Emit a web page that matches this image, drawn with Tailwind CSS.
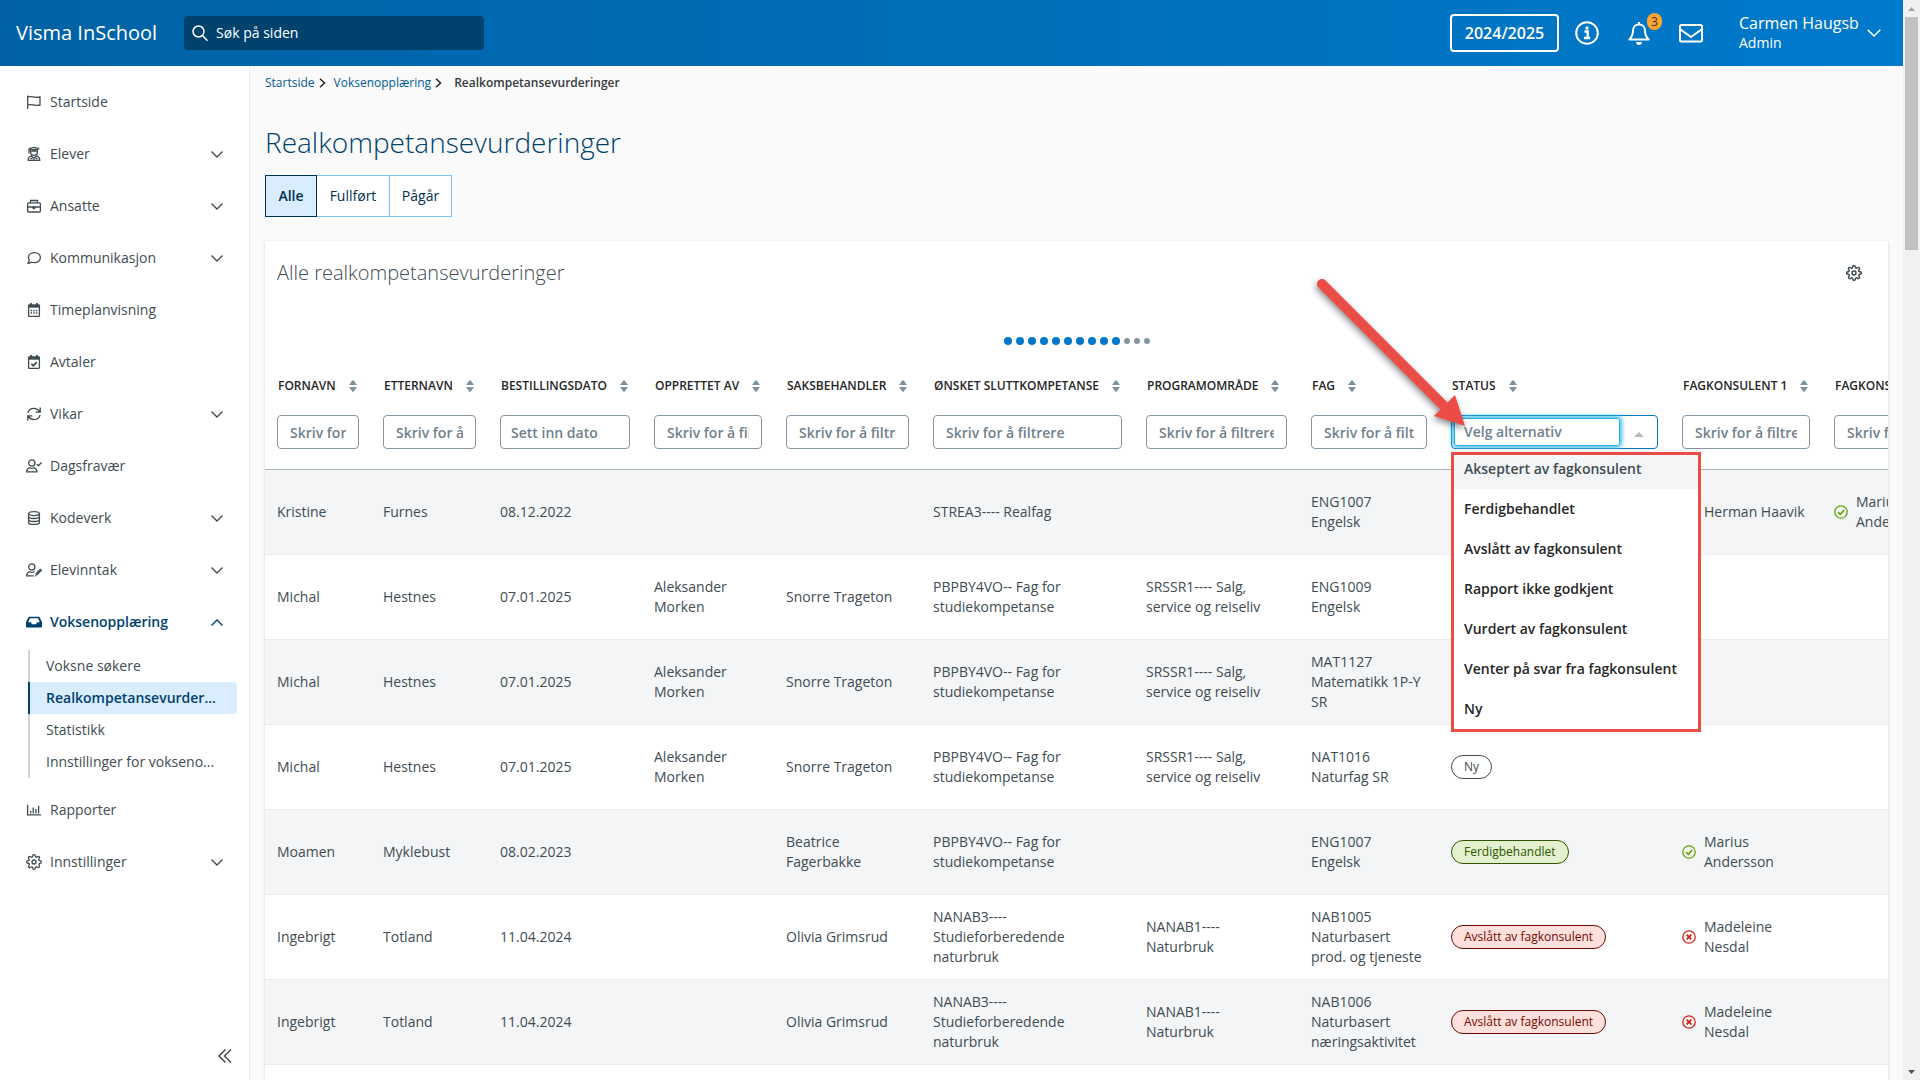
<!DOCTYPE html>
<html lang="nb">
<head>
  <meta charset="UTF-8" />
  <meta name="viewport" content="width=device-width, initial-scale=1.0"/>
  <title>Realkompetansevurderinger - Visma InSchool</title>
  <script src="https://cdn.jsdelivr.net/npm/@tailwindcss/browser@4"></script>
</head>
<body class="h-screen overflow-hidden flex bg-[#fafafa] font-['Open_Sans',sans-serif] text-sm text-[#414c52]">
  <div class="flex-1 min-w-0 flex flex-col">

    <!-- Top bar -->
    <header class="h-[66px] shrink-0 flex items-center pl-4 pr-[22px] text-white bg-linear-to-r from-[#0062a5] to-[#007acc]">
      <a href="#" class="text-xl">Visma InSchool</a>
      <label class="ml-[27px] w-[300px] h-[34px] flex items-center gap-2 px-2 rounded bg-[#00426e]">
        <svg class="size-4 shrink-0" viewBox="0 0 16 16" fill="none" stroke="currentColor" stroke-width="1.5" stroke-linecap="round"><circle cx="6.5" cy="6.5" r="5.5"/><path d="M10.5 10.5 15 15.2"/></svg>
        <input type="search" aria-label="Søk på siden" placeholder="Søk på siden" class="w-full bg-transparent outline-none placeholder:text-white" />
      </label>
      <button class="ml-auto w-[109px] h-[38px] border-2 border-white rounded text-base font-semibold">2024/2025</button>
      <button class="ml-4" aria-label="Informasjon">
        <svg class="size-6" viewBox="0 0 24 24" fill="none" stroke="currentColor" stroke-width="2"><circle cx="12" cy="12" r="10.8"/><path d="M9.5 10.5h3.2v6M9 17h6.2" stroke-width="2.4"/><circle cx="12" cy="7" r="1.7" fill="currentColor" stroke="none"/></svg>
      </button>
      <button class="ml-7 relative" aria-label="Varsler">
        <svg class="size-6" viewBox="0 0 24 24" fill="none" stroke="currentColor" stroke-width="2" stroke-linejoin="round"><path d="M12 1v2.5M12 3.5c-3.8 0-6 2.8-6 6.3 0 4.2-1.3 6.3-3.6 8.7h19.2c-2.3-2.4-3.6-4.5-3.6-8.7 0-3.5-2.2-6.3-6-6.3z"/><path d="M9 21h6a3 3 0 0 1-6 0z" fill="currentColor" stroke="none"/></svg>
        <span class="absolute left-5 -top-2 w-[15px] h-[17px] rounded-full bg-[#ffa52c] text-[#2d3438] text-xs leading-[17px]">3</span>
      </button>
      <button class="ml-7" aria-label="Meldinger">
        <svg class="size-6" viewBox="0 0 24 24" fill="none" stroke="currentColor" stroke-width="2" stroke-linejoin="round"><rect x="1" y="4" width="22" height="16.5" rx="1.5"/><path d="M1.5 8.500 12 16l10.5-7.5"/></svg>
      </button>
      <button class="ml-9 flex items-center gap-2 text-left">
        <span class="w-[120px]"><span class="block text-base leading-5 whitespace-nowrap">Carmen Haugsb</span><span class="block leading-5">Admin</span></span>
        <svg class="w-[14px] h-2" viewBox="0 0 14 8" fill="none" stroke="currentColor" stroke-width="1.5"><path d="m.7.7 6.3 6.3L13.3.7"/></svg>
      </button>
    </header>

    <div class="flex-1 min-h-0 flex">
      <!-- Sidebar -->
      <nav class="w-[250px] shrink-0 bg-white border-r border-[#eceeef] pt-[10px] pb-3 flex flex-col" aria-label="Hovedmeny">
        <a href="#" class="h-[52px] flex items-center gap-2 pl-[26px] pr-[26px]">
          <svg class="size-4" viewBox="0 0 16 16" fill="none" stroke="currentColor" stroke-width="1.3"><path d="M1.7 1.5V15M1.7 3c3.8-1.600 6.2 1.4 12.3 0v8c-6.1 1.4-8.5-1.6-12.3 0"/></svg>
          Startside
        </a>
        <a href="#" class="h-[52px] flex items-center gap-2 pl-[26px] pr-[26px]">
          <svg class="size-4" viewBox="0 0 16 16" fill="none" stroke="currentColor" stroke-width="1.3"><path d="M2.800 2.600 8 1.400l5.200 1.200L8 4zM4.600 3.400V6a3.400 3.400 0 0 0 6.800 0V3.400M4.600 5.200h6.800M3 3v4.500M2.200 14.400c0-2.400 1-3.800 2.800-4.400L8 12l3-2c1.800.6 2.800 2 2.800 4.400zM8 12v2.200M4.500 12.500h2M9.500 12.500h2"/></svg>
          Elever
          <svg class="ml-auto w-3 h-[7px]" viewBox="0 0 12 7" fill="none" stroke="currentColor" stroke-width="1.4"><path d="m.5.5 5.5 5.5L11.5.5"/></svg>
        </a>
        <a href="#" class="h-[52px] flex items-center gap-2 pl-[26px] pr-[26px]">
          <svg class="size-4" viewBox="0 0 16 16" fill="none" stroke="currentColor" stroke-width="1.3"><rect x="1.6" y="4.800" width="12.8" height="9.200" rx="1"/><path d="M4.500 4.800V2.500h7v2.300M1.600 9h12.800"/><path d="M6.300 8.500h3.400v1.800L8 11.400l-1.700-1.100z" fill="currentColor" stroke="none"/></svg>
          Ansatte
          <svg class="ml-auto w-3 h-[7px]" viewBox="0 0 12 7" fill="none" stroke="currentColor" stroke-width="1.4"><path d="m.5.5 5.5 5.5L11.5.5"/></svg>
        </a>
        <a href="#" class="h-[52px] flex items-center gap-2 pl-[26px] pr-[26px]">
          <svg class="size-4" viewBox="0 0 16 16" fill="none" stroke="currentColor" stroke-width="1.3" stroke-linejoin="round"><path d="M8.400 2.700c3.400 0 6 2.100 6 4.900s-2.600 5-6 5c-1.100 0-2-.2-2.900-.6-.9.8-2.200 1.400-3.700 1.400.8-.9 1.300-1.900 1.400-3-.5-.8-.8-1.700-.8-2.800 0-2.800 2.600-4.900 6-4.900z"/></svg>
          Kommunikasjon
          <svg class="ml-auto w-3 h-[7px]" viewBox="0 0 12 7" fill="none" stroke="currentColor" stroke-width="1.4"><path d="m.5.5 5.5 5.5L11.5.5"/></svg>
        </a>
        <a href="#" class="h-[52px] flex items-center gap-2 pl-[26px] pr-[26px]">
          <svg class="size-4" viewBox="0 0 16 16" fill="none" stroke="currentColor" stroke-width="1.3"><rect x="2.600" y="3" width="10.8" height="11.4" rx=".8"/><path d="M2.600 4.300h10.8" stroke-width="2.8"/><path d="M5 1v3M11 1v3" stroke-width="1.8"/><path d="M4.500 8.500h7M4.500 11h7" stroke-width="1.5" stroke-dasharray="1.5 1.2"/></svg>
          Timeplanvisning
        </a>
        <a href="#" class="h-[52px] flex items-center gap-2 pl-[26px] pr-[26px]">
          <svg class="size-4" viewBox="0 0 16 16" fill="none" stroke="currentColor" stroke-width="1.3"><rect x="2.600" y="3" width="10.8" height="11.4" rx=".8"/><path d="M2.600 4.300h10.8" stroke-width="2.8"/><path d="M5 1v3M11 1v3" stroke-width="1.8"/><path d="m5.300 9.800 2 1.900 3.500-3.600" stroke-width="1.7"/></svg>
          Avtaler
        </a>
        <a href="#" class="h-[52px] flex items-center gap-2 pl-[26px] pr-[26px]">
          <svg class="size-4" viewBox="0 0 16 16" fill="none" stroke="currentColor" stroke-width="1.4"><path d="M2 7c.5-2.900 3-4.600 6-4.600 2.400 0 4.300 1.200 5.500 3.200M14.200 1.500v4.600H9.700M14 9c-.5 2.900-3 4.600-6 4.600-2.400 0-4.300-1.200-5.500-3.200M1.800 14.500V9.900h4.500"/></svg>
          Vikar
          <svg class="ml-auto w-3 h-[7px]" viewBox="0 0 12 7" fill="none" stroke="currentColor" stroke-width="1.4"><path d="m.5.5 5.5 5.5L11.5.5"/></svg>
        </a>
        <a href="#" class="h-[52px] flex items-center gap-2 pl-[26px] pr-[26px]">
          <svg class="size-4" viewBox="0 0 16 16" fill="none" stroke="currentColor" stroke-width="1.3"><circle cx="5.8" cy="5" r="3.1"/><path d="M3.500 9.700C1.800 10.200.8 11.600.7 13.900h10.200c-.1-2.300-1.100-3.700-2.800-4.200-1.400.8-3.200.8-4.600 0zM10.700 6.200l1.700 1.600 3.200-3.400"/></svg>
          Dagsfravær
        </a>
        <a href="#" class="h-[52px] flex items-center gap-2 pl-[26px] pr-[26px]">
          <svg class="size-4" viewBox="0 0 16 16" fill="none" stroke="currentColor" stroke-width="1.3"><ellipse cx="8" cy="3.6" rx="5.4" ry="2"/><path d="M2.600 3.600v8.800c0 1.100 2.400 2 5.400 2s5.400-.9 5.400-2V3.600M2.600 6.500c0 1.100 2.400 2 5.400 2s5.400-.9 5.400-2M2.600 9.500c0 1.100 2.400 2 5.400 2s5.400-.9 5.400-2"/></svg>
          Kodeverk
          <svg class="ml-auto w-3 h-[7px]" viewBox="0 0 12 7" fill="none" stroke="currentColor" stroke-width="1.4"><path d="m.5.5 5.5 5.5L11.5.5"/></svg>
        </a>
        <a href="#" class="h-[52px] flex items-center gap-2 pl-[26px] pr-[26px]">
          <svg class="size-4" viewBox="0 0 16 16" fill="none" stroke="currentColor" stroke-width="1.3"><circle cx="5.8" cy="5" r="3.1"/><path d="M8.500 9.900c-.2-.1-.3-.2-.5-.2-1.400.8-3.100.8-4.500 0C1.800 10.200.8 11.600.7 13.900h7"/><path d="m10.200 12.600 5-5.100" stroke-width="2.6"/><path d="m8.800 14.400.4-2 1.700 1.600z" fill="currentColor" stroke="none"/></svg>
          Elevinntak
          <svg class="ml-auto w-3 h-[7px]" viewBox="0 0 12 7" fill="none" stroke="currentColor" stroke-width="1.4"><path d="m.5.5 5.5 5.5L11.5.5"/></svg>
        </a>
        <a href="#" class="h-[52px] flex items-center gap-2 pl-[26px] pr-[26px] font-semibold text-[#00426e]">
          <svg class="size-4" viewBox="0 0 16 16" fill="currentColor"><path fill-rule="evenodd" d="M3.400 2.700h9.200c.5 0 .8.200 1 .6L16 8v4.600c0 .6-.4 1-1 1H1c-.6 0-1-.4-1-1V8l2.400-4.700c.2-.4.5-.6 1-.6zM4 4.300 2.200 8.200h2.600c.6 0 .6 2 1.400 2h3.600c.8 0 .8-2 1.400-2h2.600L12 4.300z"/></svg>
          Voksenopplæring
          <svg class="ml-auto w-3 h-[7px]" viewBox="0 0 12 7" fill="none" stroke="currentColor" stroke-width="1.4"><path d="m.5 6.500 5.500-5.500 5.500 5.500"/></svg>
        </a>
        <div class="mt-[2px] mb-[6px] ml-7 mr-3 leading-8">
          <a href="#" class="block border-l-2 border-[#ccd3d6] px-4">Voksne søkere</a>
          <a href="#" class="block border-l-2 border-[#00426e] px-4 bg-[#d9edff] rounded-r text-[#00426e] font-semibold whitespace-nowrap" aria-current="page">Realkompetansevurder...</a>
          <a href="#" class="block border-l-2 border-[#ccd3d6] px-4">Statistikk</a>
          <a href="#" class="block border-l-2 border-[#ccd3d6] px-4 whitespace-nowrap">Innstillinger for vokseno...</a>
        </div>
        <a href="#" class="h-[52px] flex items-center gap-2 pl-[26px] pr-[26px]">
          <svg class="size-4" viewBox="0 0 16 16" fill="none" stroke="currentColor" stroke-width="1.3"><path d="M1.600 2.800v10.100h13.400M4.700 11.500V9M7.200 11.500V5.500M9.900 11.500V7M12.600 11.500V3.800"/></svg>
          Rapporter
        </a>
        <a href="#" class="h-[52px] flex items-center gap-2 pl-[26px] pr-[26px]">
          <svg class="size-4" viewBox="0 0 24 24" fill="none" stroke="currentColor" stroke-width="2"><circle cx="12" cy="12" r="3"/><path d="M19.400 15a1.650 1.650 0 0 0 .33 1.820l.06.060a2 2 0 1 1-2.830 2.830l-.06-.06a1.650 1.650 0 0 0-2.800 1.170V21a2 2 0 0 1-4 0v-.09a1.650 1.650 0 0 0-2.900-1.100l-.06.06a2 2 0 1 1-2.830-2.830l.06-.06A1.650 1.650 0 0 0 3.100 14H3a2 2 0 0 1 0-4h.09a1.650 1.650 0 0 0 1.100-2.900l-.06-.06a2 2 0 1 1 2.830-2.830l.06.06A1.650 1.650 0 0 0 10 3.100V3a2 2 0 0 1 4 0v.09a1.650 1.650 0 0 0 2.900 1.100l.06-.06a2 2 0 1 1 2.830 2.830l-.06.06A1.650 1.650 0 0 0 20.900 10H21a2 2 0 0 1 0 4h-.09a1.650 1.650 0 0 0-1.510 1z"/></svg>
          Innstillinger
          <svg class="ml-auto w-3 h-[7px]" viewBox="0 0 12 7" fill="none" stroke="currentColor" stroke-width="1.4"><path d="m.5.5 5.5 5.5L11.5.5"/></svg>
        </a>
        <button class="mt-auto ml-auto mr-4" aria-label="Skjul meny">
          <svg class="w-4 h-6" viewBox="0 0 16 24" fill="none" stroke="currentColor" stroke-width="1.5"><path d="M8.500 5.500 2 12l6.500 6.500M14 5.500 7.500 12l6.500 6.500"/></svg>
        </button>
      </nav>

      <!-- Content -->
      <main class="flex-1 min-w-0 px-[15px] overflow-hidden">
        <nav class="h-[34px] flex items-center gap-1 text-xs text-[#005b99]" aria-label="Brødsmulesti">
          <a href="#">Startside</a>
          <svg class="w-[7px] h-[10px] mr-1" viewBox="0 0 7 10" fill="none" stroke="#252626" stroke-width="1.5"><path d="m1 .7 4.5 4.3L1 9.3"/></svg>
          <a href="#">Voksenopplæring</a>
          <svg class="w-[7px] h-[10px] mr-2" viewBox="0 0 7 10" fill="none" stroke="#252626" stroke-width="1.5"><path d="m1 .7 4.5 4.3L1 9.3"/></svg>
          <span class="text-[#353a3d] font-semibold">Realkompetansevurderinger</span>
        </nav>

        <h1 class="mt-[23px] text-[28px] leading-[38px] font-light text-[#00426e]">Realkompetansevurderinger</h1>

        <div class="mt-[14px] flex h-[42px] text-[#00314f]">
          <button class="w-[52px] border border-[#00314f] bg-[#d9edff] font-semibold">Alle</button>
          <button class="w-[73px] border border-l-0 border-[#80c1f6] bg-white">Fullført</button>
          <button class="w-[62px] border border-l-0 border-[#80c1f6] bg-white">Pågår</button>
        </div>

        <section class="mt-6 bg-white shadow-[0_1px_3px_rgba(0,0,0,0.15)] overflow-hidden">
          <div class="h-16 flex items-center justify-between pl-3 pr-[26px]">
            <h2 class="text-xl font-light">Alle realkompetansevurderinger</h2>
            <button aria-label="Tabellinnstillinger">
              <svg class="size-4" viewBox="0 0 24 24" fill="none" stroke="#414c52" stroke-width="2.2"><circle cx="12" cy="12" r="3"/><path d="M19.400 15a1.650 1.650 0 0 0 .33 1.820l.06.060a2 2 0 1 1-2.830 2.830l-.06-.06a1.650 1.650 0 0 0-2.800 1.170V21a2 2 0 0 1-4 0v-.09a1.650 1.650 0 0 0-2.900-1.100l-.06.06a2 2 0 1 1-2.830-2.830l.06-.06A1.650 1.650 0 0 0 3.100 14H3a2 2 0 0 1 0-4h.09a1.650 1.650 0 0 0 1.100-2.900l-.06-.06a2 2 0 1 1 2.830-2.830l.06.06A1.650 1.650 0 0 0 10 3.100V3a2 2 0 0 1 4 0v.09a1.650 1.650 0 0 0 2.900 1.100l.06-.06a2 2 0 1 1 2.830 2.830l-.06.06A1.650 1.650 0 0 0 20.900 10H21a2 2 0 0 1 0 4h-.09a1.650 1.650 0 0 0-1.510 1z"/></svg>
            </button>
          </div>

          <div id="progress" class="h-[72px] flex items-center justify-center gap-1"></div>

          <table class="w-[1730px] table-fixed border-separate border-spacing-0 text-left">
            <colgroup>
              <col class="w-[106px]" /><col class="w-[117px]" /><col class="w-[154px]" /><col class="w-[132px]" />
              <col class="w-[147px]" /><col class="w-[213px]" /><col class="w-[165px]" /><col class="w-[140px]" />
              <col class="w-[231px]" /><col class="w-[152px]" /><col />
            </colgroup>
            <thead>
              <tr id="headRow"></tr>
            </thead>
            <tbody id="bodyRows"></tbody>
          </table>
        </section>
      </main>
    </div>
  </div>

  <!-- Scrollbar -->
  <div class="w-[17px] shrink-0 bg-[#f1f1f1] flex flex-col items-center" aria-hidden="true">
    <svg class="size-[17px]" viewBox="0 0 17 17" fill="#a3a3a3"><path d="M5 11h7L8.500 7z"/></svg>
    <div class="w-[13px] h-[233px] bg-[#c1c1c1]"></div>
    <svg class="size-[17px] mt-auto" viewBox="0 0 17 17" fill="#505050"><path d="M5 7h7l-3.500 4z"/></svg>
  </div>

  <script>
    const columns = ['Fornavn', 'Etternavn', 'Bestillingsdato', 'Opprettet av', 'Saksbehandler', 'Ønsket sluttkompetanse',
      'Programområde', 'Fag', 'Status', 'Fagkonsulent 1', 'Fagkonsulent 2'];

    const statuses = ['Akseptert av fagkonsulent', 'Ferdigbehandlet', 'Avslått av fagkonsulent', 'Rapport ikke godkjent',
      'Vurdert av fagkonsulent', 'Venter på svar fra fagkonsulent', 'Ny'];

    const rows = [
      ['Kristine', 'Furnes', '08.12.2022', '', '', 'STREA3---- Realfag', '', 'ENG1007<br>Engelsk', '', 'ok:Herman Haavik', 'ok:Marius<br>Andersson'],
      ['Michal', 'Hestnes', '07.01.2025', 'Aleksander<br>Morken', 'Snorre Trageton', 'PBPBY4VO-- Fag for<br>studiekompetanse', 'SRSSR1---- Salg,<br>service og reiseliv', 'ENG1009<br>Engelsk', '', '', ''],
      ['Michal', 'Hestnes', '07.01.2025', 'Aleksander<br>Morken', 'Snorre Trageton', 'PBPBY4VO-- Fag for<br>studiekompetanse', 'SRSSR1---- Salg,<br>service og reiseliv', 'MAT1127<br>Matematikk 1P-Y<br>SR', '', '', ''],
      ['Michal', 'Hestnes', '07.01.2025', 'Aleksander<br>Morken', 'Snorre Trageton', 'PBPBY4VO-- Fag for<br>studiekompetanse', 'SRSSR1---- Salg,<br>service og reiseliv', 'NAT1016<br>Naturfag SR', 'Ny', '', ''],
      ['Moamen', 'Myklebust', '08.02.2023', '', 'Beatrice<br>Fagerbakke', 'PBPBY4VO-- Fag for<br>studiekompetanse', '', 'ENG1007<br>Engelsk', 'Ferdigbehandlet', 'ok:Marius<br>Andersson', ''],
      ['Ingebrigt', 'Totland', '11.04.2024', '', 'Olivia Grimsrud', 'NANAB3----<br>Studieforberedende<br>naturbruk', 'NANAB1----<br>Naturbruk', 'NAB1005<br>Naturbasert<br>prod. og tjeneste', 'Avslått av fagkonsulent', 'no:Madeleine<br>Nesdal', ''],
      ['Ingebrigt', 'Totland', '11.04.2024', '', 'Olivia Grimsrud', 'NANAB3----<br>Studieforberedende<br>naturbruk', 'NANAB1----<br>Naturbruk', 'NAB1006<br>Naturbasert<br>næringsaktivitet', 'Avslått av fagkonsulent', 'no:Madeleine<br>Nesdal', ''],
      ['', '', '', '', '', '', '', '', '', '', '']
    ];

    const tagColors = {
      'Ny': 'border-[#414c52] bg-white text-[#414c52]',
      'Ferdigbehandlet': 'border-[#2f5500] bg-[#e3f1ce] text-[#2f5500]',
      'Avslått av fagkonsulent': 'border-[#6e0a00] bg-[#ffe0dc] text-[#6e0a00]'
    };

    const icons = {
      ok: '<svg class="size-[14px] shrink-0" viewBox="0 0 14 14" fill="none" stroke="#64a70b" stroke-width="1.3"><circle cx="7" cy="7" r="6.2"/><path d="m4 7.200 2.200 2.200 4-4.300" stroke-width="1.7"/></svg>',
      no: '<svg class="size-[14px] shrink-0" viewBox="0 0 14 14" fill="none" stroke="#d32213" stroke-width="1.3"><circle cx="7" cy="7" r="6.2"/><path d="m4.700 4.700 4.600 4.600M9.300 4.700 4.700 9.300" stroke-width="1.8"/></svg>'
    };

    const statusFilter = `
      <div class="relative h-[34px] flex items-center rounded border border-[#0078ca] bg-white p-[2px] pr-[13px]">
        <input type="text" role="combobox" aria-expanded="true" aria-controls="statusList" aria-label="Filtrer status" placeholder="Velg alternativ"
          class="flex-1 min-w-0 h-7 pl-[9px] pb-px border border-[#2ab4e8] rounded-[3px] shadow-[0_0_4px_2px_#3fbdec] outline-none font-semibold placeholder:text-[#6f818c]" />
        <svg class="ml-[14px] mt-1 w-[10px] h-[5px] shrink-0" viewBox="0 0 10 5" fill="#b4bcc1"><path d="M0 5h10L5 0z"/></svg>
        <div class="absolute z-10 left-[-1px] top-[33px] w-[250px] bg-white pb-[3px]">
          <ul id="statusList" role="listbox" class="font-semibold text-[#252626]">
            ${statuses.map((s, i) => `<li role="option" class="h-10 pl-[13px] leading-10 whitespace-nowrap ${i === 0 ? 'bg-[#f3f5f6] text-[#414c52]' : ''}">${s}</li>`).join('')}
          </ul>
          <div class="absolute inset-x-0 top-[3px] bottom-0 border-3 border-[#ec4c46]"></div>
        </div>
        <!-- Arrow that points at the filter -->
        <svg class="absolute z-20 right-[190px] bottom-[16px] w-[164px] h-[164px] pointer-events-none drop-shadow-[-1px_3px_3px_rgba(0,0,0,0.45)]" viewBox="0 0 164 164">
          <path d="M19 16 140 137" stroke="#ec4c46" stroke-width="10" stroke-linecap="round"/>
          <path d="M162 158 131 148l21-21z" fill="#ec4c46"/>
        </svg>
      </div>`;

    function filterField(name) {
      if (name === 'Status') return statusFilter;
      const isDate = name === 'Bestillingsdato';
      return `<input type="text" aria-label="Filtrer ${name}" placeholder="${isDate ? 'Sett inn dato' : 'Skriv for å filtrere'}"
        class="block w-full h-[34px] ${isDate ? 'px-[10px]' : 'px-3'} border border-[#8496a1] rounded bg-white font-semibold placeholder:text-[#6f818c]" />`;
    }

    document.getElementById('headRow').innerHTML = columns.map(name => `
      <th class="px-3 pb-5 border-b border-[#a9b5bc] font-normal">
        <button class="h-[18px] mb-5 pl-px flex items-center gap-[13px] text-xs font-semibold uppercase whitespace-nowrap text-[#252626]">
          ${name}
          <svg class="w-2 h-3 shrink-0" viewBox="0 0 8 12" fill="#7f929f"><path d="M0 5 3 .8q1-1.200 2 0L8 5zM0 7l3 4.200q1 1.200 2 0L8 7z"/></svg>
        </button>
        ${filterField(name)}
      </th>`).join('');

    function cell(value, i) {
      if (value && i === 8) {
        return `<span class="inline-block h-6 px-3 border rounded-full text-xs leading-[22px] whitespace-nowrap align-middle ${tagColors[value]}">${value}</span>`;
      }
      if (value && i > 8) {
        const [state, person] = value.split(':');
        return `<div class="flex items-center gap-2">${icons[state]}<span class="whitespace-nowrap">${person}</span></div>`;
      }
      return value;
    }

    document.getElementById('bodyRows').innerHTML = rows.map(r => `
      <tr class="odd:bg-[#f3f5f6]">
        ${r.map((v, i) => `<td class="h-[85px] px-3 border-b border-[#e9ecee] leading-5 whitespace-nowrap">${cell(v, i)}</td>`).join('')}
      </tr>`).join('');

    document.getElementById('progress').innerHTML =
      '<span class="size-2 rounded-full bg-[#0078ca]"></span>'.repeat(10) +
      '<span class="size-[6px] rounded-full bg-[#8496a1]"></span>'.repeat(3);
  </script>
</body>
</html>
